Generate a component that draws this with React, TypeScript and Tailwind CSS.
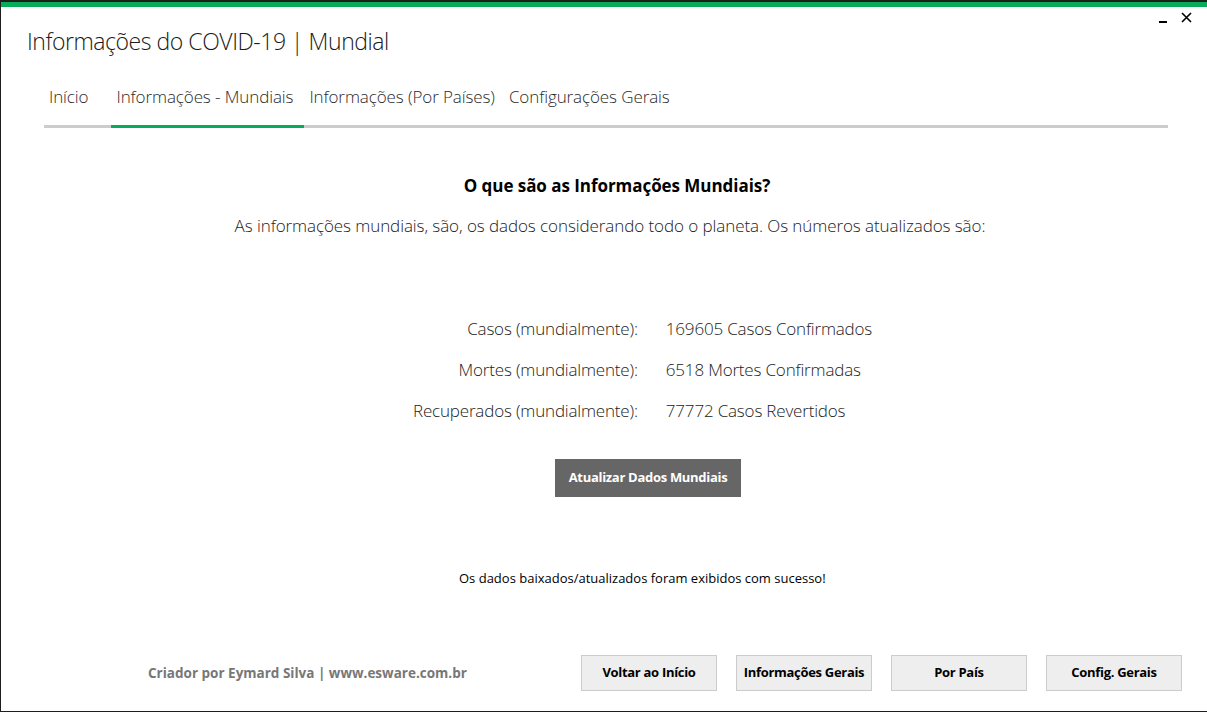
import React from 'react'

const tabs = [
  { label: 'Início', active: false, cls: 'pl-[5px] pr-[23px]' },
  { label: 'Informações - Mundiais', active: true, cls: 'pl-[5px] pr-[11px]' },
  { label: 'Informações (Por Países)', active: false, cls: 'pl-[5px] pr-[8px]' },
  { label: 'Configurações Gerais', active: false, cls: 'pl-[6px] pr-[5px]' },
]

const stats = [
  { label: 'Casos (mundialmente):', value: '169605 Casos Confirmados' },
  { label: 'Mortes (mundialmente):', value: '6518 Mortes Confirmadas' },
  { label: 'Recuperados (mundialmente):', value: '77772 Casos Revertidos' },
]

const footerButtons = ['Voltar ao Início', 'Informações Gerais', 'Por País', 'Config. Gerais']

export default function App() {
  return (
    <div
      className="w-[1207px] h-[712px] bg-white flex flex-col border-l border-b border-[#1e1e1e] text-[#1a1a1a] overflow-hidden"
      style={{ fontFamily: '"Open Sans", "Noto Sans", sans-serif' }}
    >
      {/* window chrome */}
      <div className="h-[2px] bg-[#1e1e1e]" />
      <div className="h-[5px] bg-[#06ad56]" />

      {/* title + controls */}
      <div className="flex items-start justify-between">
        <h1 className="pl-[26px] pt-[18px] text-[23px] font-light leading-[32px] text-[#1a1a1a] tracking-[-0.45px]">
          Informações do COVID-19 | Mundial
        </h1>
        <div className="flex items-center gap-[14px] pr-[15px] pt-[4px]">
          <span className="block w-[8px] h-[2px] bg-black mt-[10px]" />
          <svg width="11" height="11" viewBox="0 0 11 11">
            <path d="M1 1 L10 10 M10 1 L1 10" stroke="black" strokeWidth="1.6" />
          </svg>
        </div>
      </div>

      {/* tabs */}
      <div className="ml-[43px] mr-[39px] mt-[28px] flex border-b-[3px] border-[#cccccc]">
        {tabs.map((t) => (
          <div
            key={t.label}
            className={`${t.cls} pb-[16px] text-[17px] leading-[24px] -mb-[3px] border-b-[3px] tracking-[-0.1px] ${
              t.active ? 'border-[#06ad56]' : 'border-transparent'
            }`}
          >
            <span className="text-[#2a2a2a] font-light">{t.label}</span>
          </div>
        ))}
      </div>

      {/* content */}
      <div className="flex flex-col items-center">
        <h2 className="mt-[45px] ml-[26px] text-[17px] font-bold text-black tracking-[-0.05px]">
          O que são as Informações Mundiais?
        </h2>
        <p className="mt-[14px] ml-[12px] text-[17px] font-light text-[#222] tracking-[-0.08px]">
          As informações mundiais, são, os dados considerando todo o planeta. Os números atualizados são:
        </p>

        <div className="self-start mt-[79px] ml-[412px] grid grid-cols-[auto_auto] gap-x-[28px] gap-y-[17px] text-[17px] font-light text-[#222] tracking-[-0.18px]">
          {stats.map((s) => (
            <React.Fragment key={s.label}>
              <span className="text-right leading-[24px]">{s.label}</span>
              <span className="leading-[24px]">{s.value}</span>
            </React.Fragment>
          ))}
        </div>

        <button className="self-start mt-[36px] ml-[554px] w-[186px] h-[38px] bg-[#666666] text-white text-[13px] font-bold tracking-[-0.3px]">
          Atualizar Dados Mundiais
        </button>

        <p className="self-start mt-[72px] ml-[458px] text-[13px] text-black">
          Os dados baixados/atualizados foram exibidos com sucesso!
        </p>
      </div>

      {/* footer */}
      <div className="mt-auto mb-[20px] flex items-center">
        <span className="ml-[147px] mt-[1px] text-[13.5px] font-bold text-[#777777]">
          Criador por Eymard Silva | www.esware.com.br
        </span>
        <div className="ml-auto mr-[25px] flex gap-[19px]">
          {footerButtons.map((b) => (
            <button
              key={b}
              className="w-[136px] h-[36px] bg-[#eeeeee] border border-[#cccccc] text-[13px] font-bold text-black tracking-[-0.3px]"
            >
              {b}
            </button>
          ))}
        </div>
      </div>
    </div>
  )
}
